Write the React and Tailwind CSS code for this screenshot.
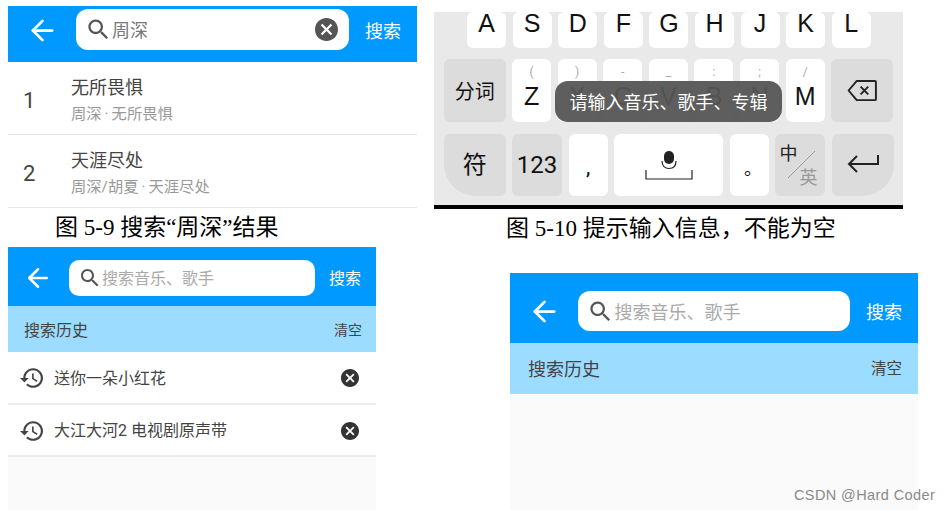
import React from 'react';
import { ArrowLeft } from 'lucide-react';

const sans = "font-['Roboto','Noto_Sans_CJK_SC',sans-serif]";

const SearchIcon = ({ className }) => (
  <svg viewBox="0 0 24 24" className={className} fill="currentColor">
    <path d="M15.5 14h-.79l-.28-.27C15.41 12.59 16 11.11 16 9.5 16 5.91 13.09 3 9.5 3S3 5.91 3 9.5 5.91 16 9.5 16c1.61 0 3.09-.59 4.23-1.57l.27.28v.79l5 4.99L20.49 19l-4.99-5zm-6 0C7.01 14 5 11.99 5 9.5S7.01 5 9.5 5 14 7.01 14 9.5 11.99 14 9.5 14z" />
  </svg>
);

const ClearIcon = ({ className }) => (
  <svg viewBox="2 2 20 20" className={className} fill="currentColor">
    <path d="M12 2C6.47 2 2 6.47 2 12s4.47 10 10 10 10-4.47 10-10S17.53 2 12 2zm5 13.59L15.59 17 12 13.41 8.41 17 7 15.59 10.59 12 7 8.41 8.41 7 12 10.59 15.59 7 17 8.41 13.41 12 17 15.59z" />
  </svg>
);

const HistoryIcon = ({ className }) => (
  <svg viewBox="1 3 21 18" className={className} fill="currentColor">
    <path d="M13 3c-4.97 0-9 4.03-9 9H1l3.89 3.89.07.14L9 12H6c0-3.87 3.13-7 7-7s7 3.13 7 7-3.13 7-7 7c-1.93 0-3.68-.79-4.94-2.06l-1.42 1.42C8.27 19.99 10.51 21 13 21c4.97 0 9-4.03 9-9s-4.03-9-9-9zm-1 5v5l4.28 2.54.72-1.21-3.5-2.08V8H12z" />
  </svg>
);

const Caption = ({ className, children }) => (
  <div className={`font-['Liberation_Serif','Noto_Sans_CJK_SC',serif] text-[23px] leading-[38px] pt-[1px] text-black whitespace-nowrap ${className}`}>
    {children}
  </div>
);

// top-left screen: search results
const ResultsScreen = () => (
  <div className="w-[409px] flex flex-col">
    <div className="h-[56px] bg-[#0099ff] flex items-start pt-[3px] text-white">
      <ArrowLeft className="w-[33px] h-[33px] ml-[17.500px] mt-[4.500px]" strokeWidth={2} />
      <div className="w-[273px] h-[41px] ml-[17.500px] bg-white rounded-[12px] flex items-center pl-[9px] pr-[11px] text-[#777]">
        <SearchIcon className="w-[27px] h-[27px] text-[#555]" />
        <span className="text-[18px] leading-none pt-[2px]">周深</span>
        <ClearIcon className="w-[23px] h-[23px] ml-auto text-[#555]" />
      </div>
      <span className="ml-[16px] mt-[12px] text-[18px] leading-[22px]">搜索</span>
    </div>
    {[
      ['1', '无所畏惧', '周深', '无所畏惧'],
      ['2', '天涯尽处', '周深/胡夏', '天涯尽处'],
    ].map(([num, title, artist, album]) => (
      <div key={num} className="h-[73px] bg-white border-b border-[#e6e6e6] flex items-center">
        <span className="w-[63px] pl-[15px] pt-[4px] text-[22px] text-[#444]">{num}</span>
        <div className="flex flex-col gap-[4px] mt-[3px]">
          <span className="text-[18px] leading-[24px] text-[#444]">{title}</span>
          <span className="text-[15.300px] leading-[20px] text-[#999] flex">
            {artist}<span className="w-[10px] text-center">·</span>{album}
          </span>
        </div>
      </div>
    ))}
  </div>
);

const Key = ({ className = '', children }) => (
  <div className={`bg-white rounded-[6px] flex items-center justify-center text-[#111] ${className}`}>
    {children}
  </div>
);

const LetterKey = ({ hint, letter }) => (
  <Key className="w-[39px] h-full flex-col !justify-start">
    <span className="text-[12px] leading-[14px] text-[#aaa] h-[14px] mt-[6px]">{hint}</span>
    <span className="text-[25px] leading-[28px] mt-[3px] font-['Liberation_Sans',sans-serif]">{letter}</span>
  </Key>
);

const Keyboard = () => (
  <div className="relative w-[469px] h-[197px] bg-[#e9e9e9] border-b-[4px] border-black flex flex-col">
    <div className="h-[35.500px] flex gap-[6.600px] pl-[33px]">
      {['A', 'S', 'D', 'F', 'G', 'H', 'J', 'K', 'L'].map((k) => (
        <Key key={k} className="w-[39px] h-full text-[25px] font-['Liberation_Sans',sans-serif]">
          <span className="leading-none -mt-[12px]">{k}</span>
        </Key>
      ))}
    </div>
    <div className="h-[62.500px] mt-[11.500px] flex gap-[6.600px] pl-[10px]">
      <Key className="w-[61.500px] h-full !bg-[#dcdcdc] text-[20px] pt-[4px]">分词</Key>
      {[['(', 'Z'], [')', 'X'], ['-', 'C'], ['_', 'V'], [':', 'B'], [';', 'N'], ['/', 'M']].map(([h, l]) => (
        <LetterKey key={l} hint={h} letter={l} />
      ))}
      <Key className="w-[62px] h-full !bg-[#dcdcdc]">
        <svg viewBox="0 0 32 24" className="w-[31px] h-[23px]" fill="none" stroke="#222" strokeWidth="2">
          <path d="M10 2h19a1 1 0 0 1 1 1v18a1 1 0 0 1-1 1H10L1.500 12z" strokeLinejoin="round" />
          <path d="M14 8l8 8M22 8l-8 8" />
        </svg>
      </Key>
    </div>
    <div className="h-[62px] mt-[12px] flex gap-[6.600px] pl-[10px]">
      <Key className="w-[61.500px] h-full !bg-[#dcdcdc] text-[24px] rounded-bl-[32px]">符</Key>
      <Key className="w-[50px] h-full !bg-[#dcdcdc] text-[24px]">123</Key>
      <Key className="w-[39px] h-full text-[22px]"><span className="mt-[4px]">,</span></Key>
      <Key className="w-[109px] h-full flex-col">
        <svg viewBox="0 0 48 30" className="w-[48px] h-[30px] mt-[2px]" fill="none">
          <rect x="19" y="0" width="10" height="13" rx="5" fill="#222" />
          <path d="M17 10c0 5 3 7.500 7 7.500s7-2.500 7-7.500" stroke="#222" strokeWidth="1.200" />
          <path d="M1 19v9h46v-9" stroke="#222" strokeWidth="1.200" />
        </svg>
      </Key>
      <Key className="w-[39px] h-full text-[18px]"><span className="mt-[8px] ml-[7px]">。</span></Key>
      <Key className="relative w-[50px] h-full !bg-[#dcdcdc] !block">
        <span className="absolute left-[4px] top-[10px] text-[18px] leading-[20px] text-[#222]">中</span>
        <span className="absolute left-[24px] top-[34px] text-[18px] leading-[20px] text-[#999]">英</span>
        <svg viewBox="0 0 50 62" className="absolute inset-0 w-[50px] h-[62px]" fill="none">
          <path d="M13 44L40 17" stroke="#999" strokeWidth="1" />
        </svg>
      </Key>
      <Key className="w-[62px] h-full !bg-[#dcdcdc] rounded-br-[32px]">
        <svg viewBox="0 0 32 22" className="w-[32px] h-[22px]" fill="none" stroke="#222" strokeWidth="2">
          <path d="M31 1v9H2M10 2L2 10l8 8" />
        </svg>
      </Key>
    </div>
    <div className="absolute left-[121px] top-[69px] w-[227px] h-[40.500px] bg-[#555]/95 rounded-[13px] flex items-center justify-center text-white text-[18px] pt-[2px]">
      请输入音乐、歌手、专辑
    </div>
  </div>
);

const HistoryRow = ({ text }) => (
  <div className="h-[52.500px] bg-white border-b-2 border-[#ececec] flex items-center pl-[12px] pr-[17px] pt-[2px]">
    <HistoryIcon className="w-[23px] h-[20px] text-[#444]" />
    <span className="ml-[11px] pt-[1px] text-[16px] text-[#444]">{text}</span>
    <ClearIcon className="w-[18px] h-[18px] ml-auto text-[#333]" />
  </div>
);

// bottom-left screen: history with rows
const HistoryScreen = () => (
  <div className="w-[368px] h-[263px] bg-[#fafafa] flex flex-col">
    <div className="h-[59px] bg-[#0099ff] flex items-start text-white">
      <ArrowLeft className="w-[30px] h-[30px] ml-[15px] mt-[16px]" strokeWidth={2} />
      <div className="w-[246px] h-[36px] ml-[16px] mt-[13px] bg-white rounded-[10px] flex items-center pl-[9px]">
        <SearchIcon className="w-[24px] h-[24px] text-[#555] shrink-0" />
        <span className="pt-[2px] text-[16px] text-[#aaa]">搜索音乐、歌手</span>
      </div>
      <span className="ml-[14px] mt-[21px] text-[16px] leading-[22px]">搜索</span>
    </div>
    <div className="h-[46px] bg-[#9cdcff] flex items-center justify-between pl-[16px] pr-[14px] pt-[3px] text-[#444]">
      <span className="text-[16px]">搜索历史</span>
      <span className="text-[14px]">清空</span>
    </div>
    <HistoryRow text="送你一朵小红花" />
    <HistoryRow text="大江大河2 电视剧原声带" />
  </div>
);

// bottom-right screen: empty history
const EmptyScreen = () => (
  <div className="w-[408px] h-[237px] bg-[#fafafa] flex flex-col">
    <div className="h-[70px] bg-[#0099ff] flex items-start text-white">
      <ArrowLeft className="w-[33px] h-[33px] ml-[17.500px] mt-[21.500px]" strokeWidth={2} />
      <div className="w-[272px] h-[40px] ml-[17.500px] mt-[18px] bg-white rounded-[12px] flex items-center pl-[8.500px]">
        <SearchIcon className="w-[27px] h-[27px] text-[#555] shrink-0" />
        <span className="ml-[1px] pt-[2px] text-[18px] text-[#aaa]">搜索音乐、歌手</span>
      </div>
      <span className="ml-[16px] mt-[28px] text-[18px] leading-[24px]">搜索</span>
    </div>
    <div className="h-[51px] bg-[#9cdcff] flex items-center justify-between pl-[18px] pr-[16px] pt-[2px] text-[#444]">
      <span className="text-[18px]">搜索历史</span>
      <span className="text-[15.500px]">清空</span>
    </div>
  </div>
);

const App = () => (
  <div className={`relative w-[951px] h-[510px] bg-white overflow-hidden flex ${sans}`}>
    <div className="w-[434px] flex flex-col pl-[8px] pt-[6px]">
      <ResultsScreen />
      <Caption className="pl-[47px] h-[39px]">图 5-9 搜索“周深”结果</Caption>
      <HistoryScreen />
    </div>
    <div className="flex-1 flex flex-col pt-[12px]">
      <Keyboard />
      <Caption className="pl-[72px]">图 5-10 提示输入信息，不能为空</Caption>
      <div className="pl-[76px] mt-[25px]">
        <EmptyScreen />
      </div>
    </div>
    <div className="absolute left-[794px] top-[486px] text-[14.500px] leading-[18px] text-[#8a8a8a] font-['Liberation_Sans',sans-serif] tracking-[0.4px]">
      CSDN @Hard Coder
    </div>
  </div>
);

export default App;
